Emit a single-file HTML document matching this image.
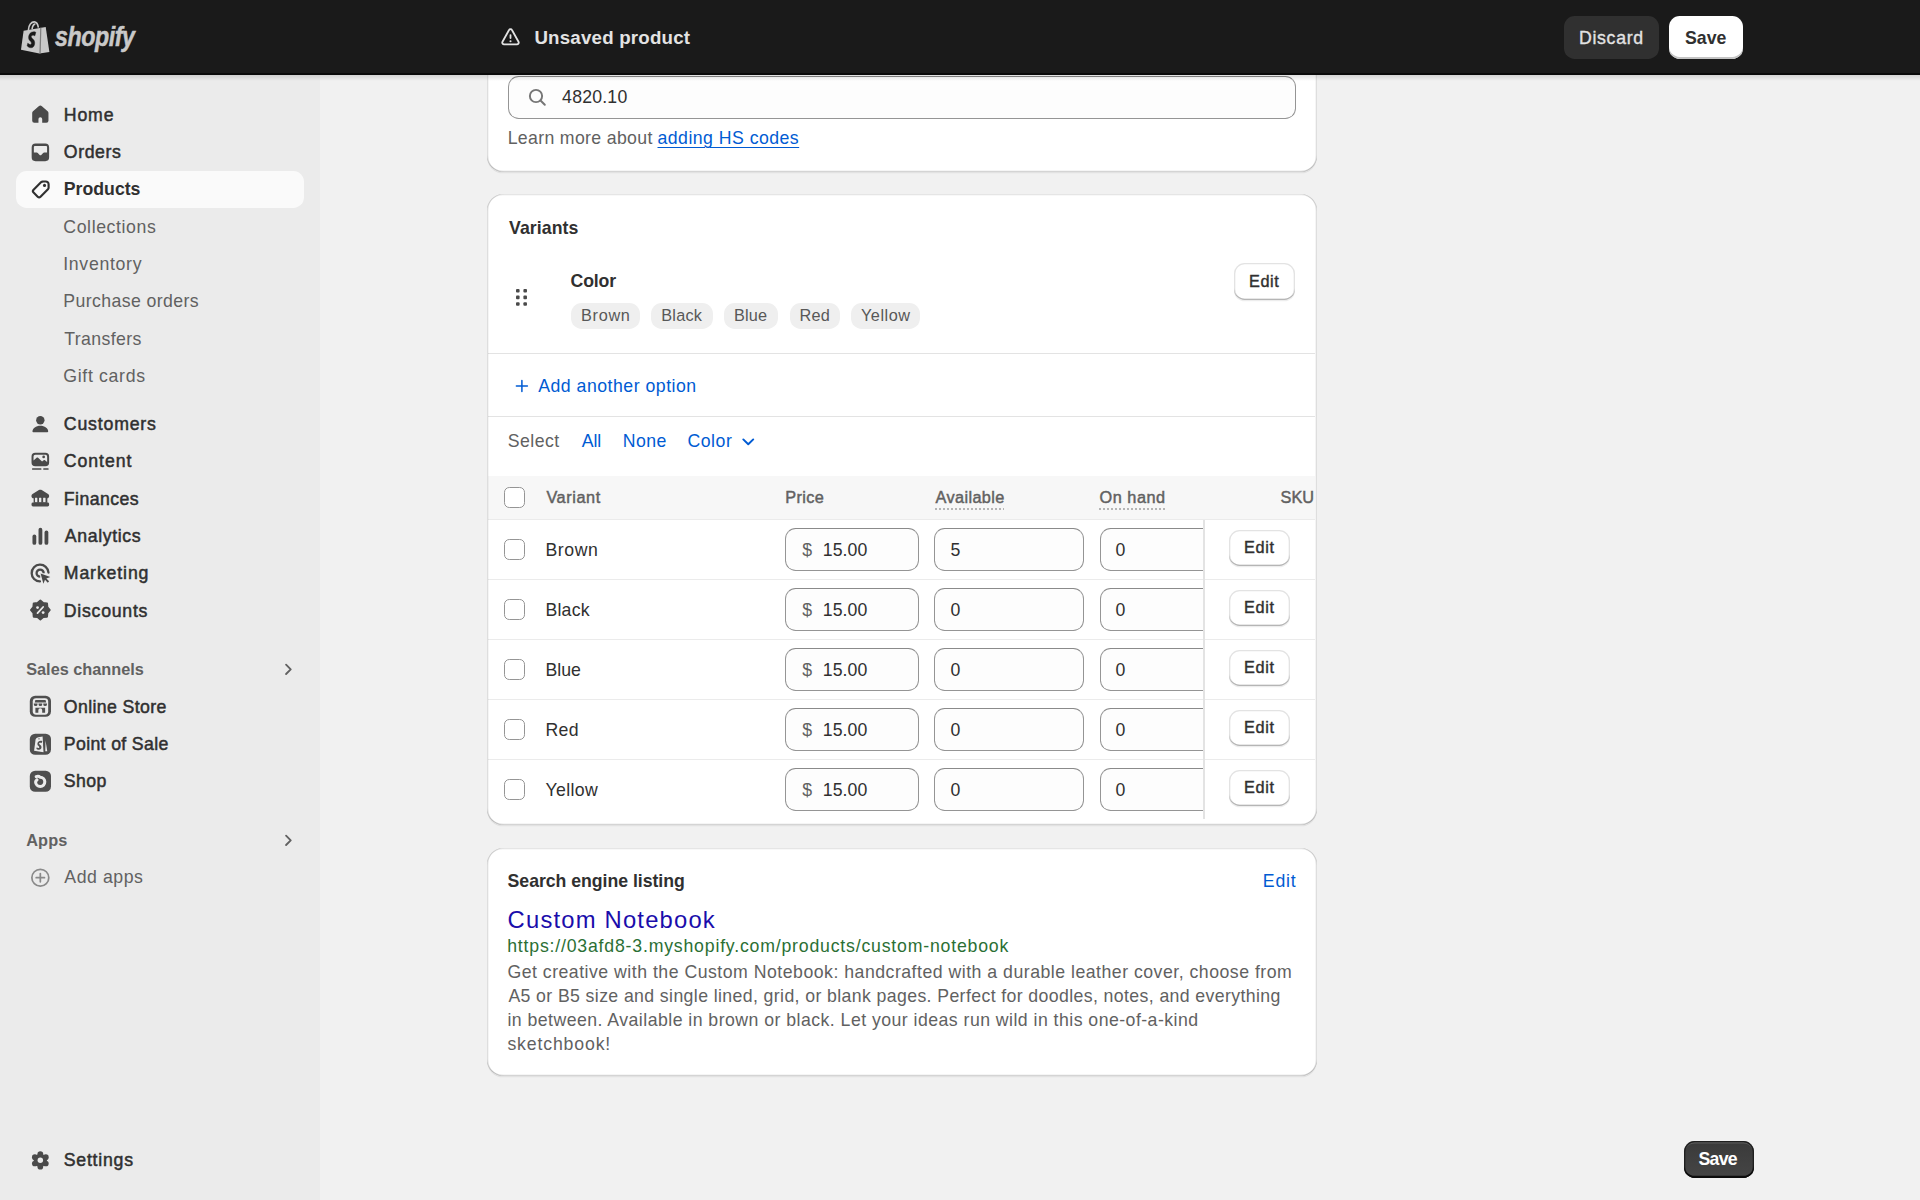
<!DOCTYPE html>
<html><head><meta charset="utf-8"><style>
*{box-sizing:border-box;margin:0;padding:0}
html,body{width:1920px;height:1200px;overflow:hidden;background:#f1f1f1;font-family:"Liberation Sans",sans-serif;color:#303030}
.a{position:absolute}
.t{position:absolute;line-height:1;white-space:nowrap}
#top{position:absolute;left:0;top:0;width:1920px;height:75px;background:#1a1a1a;z-index:5}
#topline{position:absolute;left:0;top:73px;width:1920px;height:2px;background:#0a0a0a;z-index:6}
#topshadow{position:absolute;left:0;top:75px;width:1920px;height:6px;background:linear-gradient(rgba(0,0,0,.12),rgba(0,0,0,0));z-index:4}
#nav{position:absolute;left:0;top:0;width:320px;height:1200px;background:#ebebeb}
.ic{position:absolute}
.card{position:absolute;left:487px;width:829.5px;background:#fff;border-radius:16px;box-shadow:0 1.33px 0 0 rgba(26,26,26,.07)}
.cardb{position:absolute;left:487px;width:829.5px;border-radius:16px;z-index:3;box-shadow:inset 1.33px 0 0 0 rgba(0,0,0,.13), inset -1.33px 0 0 0 rgba(0,0,0,.13), inset 0 -1.33px 0 0 rgba(0,0,0,.17), inset 0 1.33px 0 0 rgba(204,204,204,.5)}
.inp{position:absolute;background:#fdfdfd;border:1.33px solid #959595;border-top-color:#8a8a8a;border-radius:10.7px}
.btn{position:absolute;background:#fff;border-radius:10.7px;box-shadow:0 1.33px 0 0 rgba(0,0,0,.07), inset 0 -1.33px 0 0 #b5b5b5, inset 0 0 0 1.33px #e3e3e3}
.pill{position:absolute;height:26.3px;background:#efefef;border-radius:10.7px}
.hl{position:absolute;height:1.33px;background:#ebebeb}
.cb{position:absolute;width:21px;height:21px;border:1.4px solid #959595;border-radius:5.3px;background:#fff}
</style></head><body>
<div id="nav"></div>
<div class="a" style="left:16px;top:171.2px;width:288px;height:37.3px;background:#fafafa;border-radius:10.7px"></div>
<svg class="ic" style="left:26.66px;top:100.87px" width="26.67" height="26.67" viewBox="0 0 20 20"><path fill="#4a4a4a" d="M8.8 4a1.8 1.8 0 0 1 2.4 0l4.3 3.7c.4.35.6.85.6 1.35v5.75a1.6 1.6 0 0 1-1.6 1.6H11.4v-2.9a1.4 1.4 0 0 0-2.8 0v2.9H5.5a1.6 1.6 0 0 1-1.6-1.6V9.05c0-.5.2-1 .6-1.35z"/></svg>
<svg class="ic" style="left:26.66px;top:138.56px" width="26.67" height="26.67" viewBox="0 0 20 20"><path fill="#4a4a4a" fill-rule="evenodd" d="M6.4 3.47h7.3a2.9 2.9 0 0 1 2.9 2.9v7.35a2.9 2.9 0 0 1-2.9 2.9H6.4a2.9 2.9 0 0 1-2.9-2.9V6.37a2.9 2.9 0 0 1 2.9-2.9zM5.9 5.2H14.3Q15.05 5.2 15.05 5.95V10.05H12.9Q12.4 10.05 12.1 10.45L10.9 11.8Q10.1 12.55 9.3 11.8L8.1 10.45Q7.8 10.05 7.3 10.05H5.15V5.95Q5.15 5.2 5.9 5.2z"/></svg>
<svg class="ic" style="left:26.66px;top:175.97px" width="26.67" height="26.67" viewBox="0 0 20 20"><path fill="none" stroke="#303030" stroke-width="1.6" stroke-linejoin="round" d="M11.6 4.15h2.5a2.1 2.1 0 0 1 2.1 2.1v2.5c0 .45-.18.88-.5 1.2l-5.55 5.55a1.5 1.5 0 0 1-2.12 0l-3.1-3.1a1.5 1.5 0 0 1 0-2.12l5.55-5.55c.32-.32.75-.5 1.2-.5z"/><circle cx="13.15" cy="7.05" r="1.15" fill="#303030"/></svg>
<svg class="ic" style="left:26.66px;top:410.67px" width="26.67" height="26.67" viewBox="0 0 20 20"><circle cx="10" cy="6.9" r="3.15" fill="#4a4a4a"/><path fill="#4a4a4a" d="M4.1 15.4c0-2.4 2.65-4.3 5.9-4.3s5.9 1.9 5.9 4.3c0 .35-.25.6-.6.6H4.7c-.35 0-.6-.25-.6-.6z"/></svg>
<svg class="ic" style="left:26.66px;top:447.67px" width="26.67" height="26.67" viewBox="0 0 20 20"><path fill="#4a4a4a" fill-rule="evenodd" d="M6.2 3.6h7.6a2.8 2.8 0 0 1 2.8 2.8v4.4a2.8 2.8 0 0 1-2.8 2.8H6.2a2.8 2.8 0 0 1-2.8-2.8V6.4a2.8 2.8 0 0 1 2.8-2.8zm0 1.5a1.3 1.3 0 0 0-1.3 1.3v2.9l2.3-2c.3-.3.8-.3 1.1 0l3 2.8 1.2-1c.3-.2.7-.2 1 0l1.6 1.4V6.4a1.3 1.3 0 0 0-1.3-1.3z"/><circle cx="12.5" cy="6.7" r="1" fill="#4a4a4a"/><rect x="3.8" y="15.1" width="7" height="1.3" rx=".3" fill="#4a4a4a"/><rect x="12.2" y="15.1" width="4" height="1.3" rx=".3" fill="#4a4a4a"/></svg>
<svg class="ic" style="left:26.66px;top:484.67px" width="26.67" height="26.67" viewBox="0 0 20 20"><path fill="#4a4a4a" d="M8.95 3.8c.65-.4 1.45-.4 2.1 0l4.75 2.9c.5.3.8.85.8 1.45v.2c0 .85-.7 1.6-1.6 1.6H4.95c-.9 0-1.6-.75-1.6-1.6v-.2c0-.6.3-1.15.8-1.45z"/><rect x="4.97" y="8.8" width="10.28" height="4.6" fill="#4a4a4a"/><rect x="6.02" y="9.5" width="1.73" height="3.45" rx=".3" fill="#ebebeb"/><rect x="9.02" y="9.5" width="1.73" height="3.45" rx=".3" fill="#ebebeb"/><rect x="12.1" y="9.5" width="1.8" height="3.45" rx=".3" fill="#ebebeb"/><rect x="3.4" y="13.1" width="13.2" height="3.05" rx="1.1" fill="#4a4a4a"/></svg>
<svg class="ic" style="left:26.66px;top:523.16px" width="26.67" height="26.67" viewBox="0 0 20 20"><rect x="4.1" y="8.65" width="2.85" height="7.7" rx="1.42" fill="#4a4a4a"/><rect x="8.65" y="3.6" width="2.85" height="12.75" rx="1.42" fill="#4a4a4a"/><rect x="13.15" y="5.7" width="2.85" height="10.65" rx="1.42" fill="#4a4a4a"/></svg>
<svg class="ic" style="left:26.66px;top:560.16px" width="26.67" height="26.67" viewBox="0 0 20 20"><path fill="none" stroke="#4a4a4a" stroke-width="1.75" stroke-linecap="round" d="M16.1 9.4A6.3 6.3 0 1 0 9.7 16.1"/><path fill="none" stroke="#4a4a4a" stroke-width="1.75" d="M12.5 9.9A2.65 2.65 0 1 0 9.9 12.5"/><path fill="#4a4a4a" d="M10.2 10.1l7.3 2.6-3 1.2 2.1 2.1-1 1-2.1-2.1-1.2 3z"/></svg>
<svg class="ic" style="left:26.66px;top:597.46px" width="26.67" height="26.67" viewBox="0 0 20 20"><polygon points="10.03,2.67 12.21,4.50 15.05,4.75 15.30,7.59 17.13,9.77 15.30,11.95 15.05,14.79 12.21,15.04 10.03,16.87 7.85,15.04 5.01,14.79 4.76,11.95 2.93,9.77 4.76,7.59 5.01,4.75 7.85,4.50" fill="#4a4a4a" stroke="#4a4a4a" stroke-width="1.4" stroke-linejoin="round"/><path stroke="#ebebeb" stroke-width="1.35" stroke-linecap="round" d="M7.9 12.1l4.2-4.6"/><circle cx="7.9" cy="7.9" r="1.05" fill="#ebebeb"/><circle cx="12.1" cy="11.7" r="1.05" fill="#ebebeb"/></svg>
<svg class="ic" style="left:26.66px;top:693.26px" width="26.67" height="26.67" viewBox="0 0 20 20"><rect x="2.1" y="2.0" width="15.9" height="15.9" rx="4" fill="#4f4f4f"/><rect x="4.3" y="3.85" width="11.6" height="12.45" rx="2.6" fill="#ebebeb"/><path fill="#4f4f4f" d="M6.3 5.2h7.6l.5 1.9H5.8z"/><path fill="#4f4f4f" d="M5.1 7.9h2.8v.5a1.4 1.4 0 0 1-2.8 0zM8.65 7.9h2.8v.5a1.4 1.4 0 0 1-2.8 0zM12.2 7.9h2.8v.5a1.4 1.4 0 0 1-2.8 0z"/><path fill="#4f4f4f" d="M6.3 11.05h7.3v3.75h-2.2v-1.9a1.45 1.45 0 0 0-2.9 0v1.9H6.3z"/></svg>
<svg class="ic" style="left:26.66px;top:730.56px" width="26.67" height="26.67" viewBox="0 0 20 20"><rect x="2.1" y="2.0" width="15.9" height="15.9" rx="4" fill="#4f4f4f"/><path fill="#ebebeb" d="M5.31 14.75 L6.45 6.4 Q6.8 4.95 8.5 4.6 L11.7 4.13 L12.4 15.92 Z"/><path fill="#ebebeb" d="M13.9 7.1 L15.2 15.2 L13.7 15.2 z"/><circle cx="9.0" cy="5.9" r=".55" fill="#4f4f4f"/><path fill="#4f4f4f" transform="matrix(0.9 0 0 0.9 1.4 0.3)" d="M11.1 8.35l-.5 1.5s-.5-.3-1.1-.3c-.9 0-.95.55-.95.7 0 .75 2 1.05 2 2.85 0 1.4-.9 2.3-2.1 2.3-1.5 0-2.2-.95-2.2-.95l.4-1.3s.8.65 1.45.65c.45 0 .6-.35.6-.6 0-1-1.6-1.05-1.6-2.65 0-1.4 1-2.75 3-2.75.75 0 1.1.3 1.1.3z"/></svg>
<svg class="ic" style="left:26.66px;top:767.87px" width="26.67" height="26.67" viewBox="0 0 20 20"><rect x="2.1" y="2.0" width="15.9" height="15.9" rx="4" fill="#4f4f4f"/><path fill="none" stroke="#ebebeb" stroke-width="2.3" stroke-linecap="round" d="M6.9 6.5 C7.8 6.1 8.9 6.0 9.9 6.95 A3.45 3.45 0 1 1 6.45 10.5 Q6.5 9.5 7.5 8.9"/></svg>
<svg class="ic" style="left:26.66px;top:864.37px" width="26.67" height="26.67" viewBox="0 0 20 20"><circle cx="10" cy="10.3" r="6.35" fill="none" stroke="#8a8a8a" stroke-width="1.3"/><path stroke="#8a8a8a" stroke-width="1.3" stroke-linecap="round" d="M10 7.2v6.2M6.9 10.3h6.2"/></svg>
<svg class="ic" style="left:26.66px;top:1146.66px" width="26.67" height="26.67" viewBox="0 0 20 20"><circle cx="10" cy="10" r="4.9" fill="#4a4a4a"/><circle cx="10.00" cy="5.25" r="2.15" fill="#4a4a4a"/><circle cx="5.89" cy="7.62" r="2.15" fill="#4a4a4a"/><circle cx="5.89" cy="12.38" r="2.15" fill="#4a4a4a"/><circle cx="10.00" cy="14.75" r="2.15" fill="#4a4a4a"/><circle cx="14.11" cy="12.38" r="2.15" fill="#4a4a4a"/><circle cx="14.11" cy="7.62" r="2.15" fill="#4a4a4a"/><circle cx="10" cy="10" r="2.05" fill="#ebebeb"/></svg>
<div class="t" style="left:63.80px;top:107px;font-size:17.7px;color:#303030;font-weight:400;letter-spacing:0.833px;-webkit-text-stroke:0.5px #303030;">Home</div>
<div class="t" style="left:63.80px;top:144px;font-size:17.7px;color:#303030;font-weight:400;letter-spacing:0.600px;-webkit-text-stroke:0.5px #303030;">Orders</div>
<div class="t" style="left:63.80px;top:416px;font-size:17.7px;color:#303030;font-weight:400;letter-spacing:0.825px;-webkit-text-stroke:0.5px #303030;">Customers</div>
<div class="t" style="left:63.80px;top:453px;font-size:17.7px;color:#303030;font-weight:400;letter-spacing:0.933px;-webkit-text-stroke:0.5px #303030;">Content</div>
<div class="t" style="left:63.80px;top:491px;font-size:17.7px;color:#303030;font-weight:400;letter-spacing:0.429px;-webkit-text-stroke:0.5px #303030;">Finances</div>
<div class="t" style="left:64.80px;top:528px;font-size:17.7px;color:#303030;font-weight:400;letter-spacing:0.625px;-webkit-text-stroke:0.5px #303030;">Analytics</div>
<div class="t" style="left:63.80px;top:565px;font-size:17.7px;color:#303030;font-weight:400;letter-spacing:0.875px;-webkit-text-stroke:0.5px #303030;">Marketing</div>
<div class="t" style="left:63.80px;top:603px;font-size:17.7px;color:#303030;font-weight:400;letter-spacing:0.750px;-webkit-text-stroke:0.5px #303030;">Discounts</div>
<div class="t" style="left:63.80px;top:699px;font-size:17.7px;color:#303030;font-weight:400;letter-spacing:0.391px;-webkit-text-stroke:0.5px #303030;">Online Store</div>
<div class="t" style="left:63.80px;top:736px;font-size:17.7px;color:#303030;font-weight:400;letter-spacing:0.350px;-webkit-text-stroke:0.5px #303030;">Point of Sale</div>
<div class="t" style="left:63.80px;top:773px;font-size:17.7px;color:#303030;font-weight:400;letter-spacing:0.433px;-webkit-text-stroke:0.5px #303030;">Shop</div>
<div class="t" style="left:63.80px;top:1152px;font-size:17.7px;color:#303030;font-weight:400;letter-spacing:0.757px;-webkit-text-stroke:0.5px #303030;">Settings</div>
<div class="t" style="left:63.80px;top:181px;font-size:17.7px;color:#303030;font-weight:700;letter-spacing:0.000px;">Products</div>
<div class="t" style="left:63.30px;top:219px;font-size:17.7px;color:#616161;font-weight:400;letter-spacing:0.600px;">Collections</div>
<div class="t" style="left:63.20px;top:256px;font-size:17.7px;color:#616161;font-weight:400;letter-spacing:0.700px;">Inventory</div>
<div class="t" style="left:63.30px;top:293px;font-size:17.7px;color:#616161;font-weight:400;letter-spacing:0.400px;">Purchase orders</div>
<div class="t" style="left:64.30px;top:331px;font-size:17.7px;color:#616161;font-weight:400;letter-spacing:0.375px;">Transfers</div>
<div class="t" style="left:63.30px;top:368px;font-size:17.7px;color:#616161;font-weight:400;letter-spacing:0.667px;">Gift cards</div>
<div class="t" style="left:64.30px;top:869px;font-size:17.7px;color:#616161;font-weight:400;letter-spacing:0.557px;">Add apps</div>
<div class="t" style="left:26.20px;top:661px;font-size:16.3px;color:#616161;font-weight:700;letter-spacing:0.000px;">Sales channels</div>
<div class="t" style="left:26.20px;top:832px;font-size:16.3px;color:#616161;font-weight:700;letter-spacing:0.167px;">Apps</div>
<svg class="ic" style="left:274.67px;top:656.16px" width="26.67" height="26.67" viewBox="0 0 20 20"><path fill="none" stroke="#616161" stroke-width="1.4" stroke-linecap="round" stroke-linejoin="round" d="M8.3 6.5l3.5 3.5-3.5 3.5"/></svg>
<svg class="ic" style="left:274.67px;top:826.87px" width="26.67" height="26.67" viewBox="0 0 20 20"><path fill="none" stroke="#616161" stroke-width="1.4" stroke-linecap="round" stroke-linejoin="round" d="M8.3 6.5l3.5 3.5-3.5 3.5"/></svg>
<div id="top"></div><div id="topline"></div><div id="topshadow"></div>
<svg class="a" style="left:21px;top:21px;z-index:7" width="29" height="33" viewBox="0 0 29 33">
<path fill="#c9c9c9" d="M2.6 9.8 L24.7 6.1 L28.4 31 L18.4 32.6 L0 28.8 Z"/>
<path fill="none" stroke="#c9c9c9" stroke-width="1.6" d="M7.4 9 C7.6 4 10.5 .9 13.2 .9 C15.6 .9 16.8 3.2 17.4 6.6 M11 8.4 C11.5 5 12.8 3 14.4 3.1"/>
<path fill="#7d7d7d" d="M19.2 6.8 L20.4 6.6 L19.7 32.4 L18.4 32.6 Z"/>
<path fill="#1a1a1a" stroke="#1a1a1a" stroke-width=".35" transform="matrix(0.98 0 0 1.18 1.2 -2.9)" d="M13.9 12.1l-1 3s-.9-.5-2-.5c-1.6 0-1.7 1-1.7 1.3 0 1.4 3.6 1.9 3.6 5.1 0 2.5-1.6 4.2-3.8 4.2-2.7 0-4-1.7-4-1.7l.7-2.3s1.4 1.2 2.6 1.2c.8 0 1.1-.6 1.1-1.1 0-1.8-2.9-1.9-2.9-4.8 0-2.5 1.8-5 5.4-5 1.4 0 2 .6 2 .6z"/>
</svg>
<div class="t" style="left:54.50px;top:24px;font-size:27px;color:#c9c9c9;font-weight:700;letter-spacing:-0.500px;-webkit-text-stroke:0.5px #c9c9c9;font-style:italic;z-index:7;transform:scaleX(0.86);transform-origin:0 0">shopify</div>
<svg class="a" style="left:500px;top:27px;z-index:7" width="21" height="20" viewBox="0 0 21 20"><path d="M8.9 3.2a1.8 1.8 0 0 1 3.2 0l6.4 11.5a1.8 1.8 0 0 1-1.6 2.7H4.1a1.8 1.8 0 0 1-1.6-2.7z" fill="none" stroke="#e3e3e3" stroke-width="1.8" stroke-linejoin="round"/><rect x="9.6" y="7.2" width="1.8" height="4.8" rx=".9" fill="#e3e3e3"/><circle cx="10.5" cy="14.2" r="1.05" fill="#e3e3e3"/></svg>
<div class="t" style="left:534.40px;top:29px;font-size:18.7px;color:#e3e3e3;font-weight:700;letter-spacing:0.214px;z-index:7">Unsaved product</div>
<div class="a" style="left:1563.5px;top:16px;width:95px;height:42.7px;background:#303030;border-radius:10.7px;z-index:7"></div>
<div class="t" style="left:1578.90px;top:30px;font-size:17.7px;color:#e3e3e3;font-weight:400;letter-spacing:0.717px;-webkit-text-stroke:0.35px #e3e3e3;z-index:7">Discard</div>
<div class="a" style="left:1669px;top:16px;width:74px;height:42.7px;background:#fff;border-radius:10.7px;box-shadow:inset 0 -2px 0 0 #c4c4c4;z-index:7"></div>
<div class="t" style="left:1685.00px;top:30px;font-size:17.7px;color:#303030;font-weight:700;letter-spacing:0.000px;z-index:7">Save</div>
<div class="card" style="top:20px;height:151.5px"></div>
<div class="inp" style="left:508px;top:76.3px;width:787.5px;height:42.3px"></div>
<svg class="ic" style="left:524.00px;top:84.00px" width="26.67" height="26.67" viewBox="0 0 20 20"><circle cx="9" cy="9" r="4.6" fill="none" stroke="#767676" stroke-width="1.45"/><path stroke="#767676" stroke-width="1.5" stroke-linecap="round" d="M12.4 12.4l3.2 3.2"/></svg>
<div class="t" style="left:562.10px;top:89px;font-size:17.7px;color:#303030;font-weight:400;letter-spacing:0.200px;">4820.10</div>
<div class="t" style="left:507.70px;top:130px;font-size:17.7px;color:#616161;font-weight:400;letter-spacing:0.333px;">Learn more about</div>
<div class="t" style="left:657.50px;top:130px;font-size:17.7px;color:#005bd3;font-weight:400;letter-spacing:0.464px;text-decoration:underline;text-underline-offset:3px;text-decoration-thickness:1.33px">adding HS codes</div>
<div class="card" style="top:194.3px;height:631px"></div>
<div class="t" style="left:509.00px;top:220px;font-size:17.7px;color:#303030;font-weight:700;letter-spacing:0.071px;">Variants</div>
<svg class="ic" style="left:515.60px;top:288.80px" width="11.2" height="17" viewBox="0 0 11.2 17"><rect x="0" y="0" width="3.6" height="3.6" rx="1" fill="#4a4a4a"/><rect x="0" y="6.6" width="3.6" height="3.6" rx="1" fill="#4a4a4a"/><rect x="0" y="13.2" width="3.6" height="3.6" rx="1" fill="#4a4a4a"/><rect x="7.4" y="0" width="3.6" height="3.6" rx="1" fill="#4a4a4a"/><rect x="7.4" y="6.6" width="3.6" height="3.6" rx="1" fill="#4a4a4a"/><rect x="7.4" y="13.2" width="3.6" height="3.6" rx="1" fill="#4a4a4a"/></svg>
<div class="t" style="left:570.50px;top:273px;font-size:17.7px;color:#303030;font-weight:700;letter-spacing:-0.125px;">Color</div>
<div class="pill" style="left:570.8px;top:302.9px;width:68.8px"></div>
<div class="t" style="left:581.10px;top:307px;font-size:16.3px;color:#585858;font-weight:400;letter-spacing:0.650px;">Brown</div>
<div class="pill" style="left:650.8px;top:302.9px;width:62.1px"></div>
<div class="t" style="left:661.30px;top:307px;font-size:16.3px;color:#585858;font-weight:400;letter-spacing:0.200px;">Black</div>
<div class="pill" style="left:724px;top:302.9px;width:54.0px"></div>
<div class="t" style="left:734.00px;top:307px;font-size:16.3px;color:#585858;font-weight:400;letter-spacing:0.167px;">Blue</div>
<div class="pill" style="left:789.5px;top:302.9px;width:50.1px"></div>
<div class="t" style="left:799.50px;top:307px;font-size:16.3px;color:#585858;font-weight:400;letter-spacing:0.250px;">Red</div>
<div class="pill" style="left:850.8px;top:302.9px;width:69.7px"></div>
<div class="t" style="left:861.00px;top:307px;font-size:16.3px;color:#585858;font-weight:400;letter-spacing:0.500px;">Yellow</div>
<div class="btn" style="left:1234.3px;top:263px;width:60.7px;height:36.5px"></div>
<div class="t" style="left:1249.00px;top:273px;font-size:16.3px;color:#303030;font-weight:400;letter-spacing:0.600px;-webkit-text-stroke:0.4px #303030;">Edit</div>
<div class="hl" style="left:488.3px;top:353px;width:827px;background:#e3e3e3"></div>
<svg class="ic" style="left:512.50px;top:376.80px" width="17.8" height="17.8" viewBox="0 0 20 20"><path stroke="#005bd3" stroke-width="1.7" stroke-linecap="round" d="M10 3.8v12.4M3.8 10h12.4"/></svg>
<div class="t" style="left:538.20px;top:378px;font-size:17.7px;color:#005bd3;font-weight:400;letter-spacing:0.500px;">Add another option</div>
<div class="hl" style="left:488.3px;top:416px;width:827px;background:#e3e3e3"></div>
<div class="t" style="left:507.70px;top:433px;font-size:17.7px;color:#616161;font-weight:400;letter-spacing:0.480px;">Select</div>
<div class="t" style="left:581.70px;top:433px;font-size:17.7px;color:#005bd3;font-weight:400;letter-spacing:-0.050px;">All</div>
<div class="t" style="left:622.70px;top:433px;font-size:17.7px;color:#005bd3;font-weight:400;letter-spacing:0.433px;">None</div>
<div class="t" style="left:687.40px;top:433px;font-size:17.7px;color:#005bd3;font-weight:400;letter-spacing:0.550px;">Color</div>
<svg class="ic" style="left:738.60px;top:432.00px" width="19.5" height="19.5" viewBox="0 0 20 20"><path fill="none" stroke="#005bd3" stroke-width="2" stroke-linecap="round" stroke-linejoin="round" d="M4.4 7.6l5.1 5 5.1-5"/></svg>
<div class="a" style="left:488.3px;top:476.3px;width:827px;height:43px;background:#f7f7f7"></div>
<div class="cb" style="left:504.2px;top:486.7px"></div>
<div class="t" style="left:546.40px;top:489px;font-size:16.3px;color:#616161;font-weight:400;letter-spacing:0.567px;-webkit-text-stroke:0.45px #616161;">Variant</div>
<div class="t" style="left:785.30px;top:489px;font-size:16.3px;color:#616161;font-weight:400;letter-spacing:0.375px;-webkit-text-stroke:0.45px #616161;">Price</div>
<div class="t" style="left:935.50px;top:489px;font-size:16.3px;color:#616161;font-weight:400;letter-spacing:0.387px;-webkit-text-stroke:0.45px #616161;text-decoration:underline dotted #b5b5b5;text-decoration-thickness:2px;text-underline-offset:4.5px;">Available</div>
<div class="t" style="left:1099.50px;top:489px;font-size:16.3px;color:#616161;font-weight:400;letter-spacing:0.533px;-webkit-text-stroke:0.45px #616161;text-decoration:underline dotted #b5b5b5;text-decoration-thickness:2px;text-underline-offset:4.5px;">On hand</div>
<div class="t" style="left:1280.60px;top:489px;font-size:16.3px;color:#616161;font-weight:400;letter-spacing:0.000px;-webkit-text-stroke:0.45px #616161;">SKU</div>
<div class="hl" style="left:488.3px;top:519.0px;width:827px;background:#ebebeb"></div>
<div class="cb" style="left:504.2px;top:538.6px"></div>
<div class="t" style="left:545.40px;top:542px;font-size:17.7px;color:#303030;font-weight:400;letter-spacing:0.600px;">Brown</div>
<div class="inp" style="left:785.4px;top:528.1px;width:133.6px;height:42.5px"></div>
<div class="t" style="left:802.20px;top:542px;font-size:17.7px;color:#616161;font-weight:400;letter-spacing:0.000px;">$</div>
<div class="t" style="left:822.80px;top:542px;font-size:17.7px;color:#303030;font-weight:400;letter-spacing:0.050px;">15.00</div>
<div class="inp" style="left:934.4px;top:528.1px;width:149.5px;height:42.5px"></div>
<div class="t" style="left:950.60px;top:542px;font-size:17.7px;color:#303030;font-weight:400;letter-spacing:0.000px;">5</div>
<div class="inp" style="left:1100px;top:528.1px;width:104px;height:42.5px;border-right:none;border-radius:10.7px 0 0 10.7px"></div>
<div class="t" style="left:1115.50px;top:542px;font-size:17.7px;color:#303030;font-weight:400;letter-spacing:0.000px;">0</div>
<div class="btn" style="left:1229.3px;top:530.0px;width:60.7px;height:36px"></div>
<div class="t" style="left:1243.90px;top:539px;font-size:16.3px;color:#303030;font-weight:400;letter-spacing:0.700px;-webkit-text-stroke:0.4px #303030;">Edit</div>
<div class="hl" style="left:488.3px;top:579.0px;width:827px;background:#ebebeb"></div>
<div class="cb" style="left:504.2px;top:598.6px"></div>
<div class="t" style="left:545.40px;top:602px;font-size:17.7px;color:#303030;font-weight:400;letter-spacing:0.225px;">Black</div>
<div class="inp" style="left:785.4px;top:588.1px;width:133.6px;height:42.5px"></div>
<div class="t" style="left:802.20px;top:602px;font-size:17.7px;color:#616161;font-weight:400;letter-spacing:0.000px;">$</div>
<div class="t" style="left:822.80px;top:602px;font-size:17.7px;color:#303030;font-weight:400;letter-spacing:0.050px;">15.00</div>
<div class="inp" style="left:934.4px;top:588.1px;width:149.5px;height:42.5px"></div>
<div class="t" style="left:950.60px;top:602px;font-size:17.7px;color:#303030;font-weight:400;letter-spacing:0.000px;">0</div>
<div class="inp" style="left:1100px;top:588.1px;width:104px;height:42.5px;border-right:none;border-radius:10.7px 0 0 10.7px"></div>
<div class="t" style="left:1115.50px;top:602px;font-size:17.7px;color:#303030;font-weight:400;letter-spacing:0.000px;">0</div>
<div class="btn" style="left:1229.3px;top:590.0px;width:60.7px;height:36px"></div>
<div class="t" style="left:1243.90px;top:599px;font-size:16.3px;color:#303030;font-weight:400;letter-spacing:0.700px;-webkit-text-stroke:0.4px #303030;">Edit</div>
<div class="hl" style="left:488.3px;top:639.0px;width:827px;background:#ebebeb"></div>
<div class="cb" style="left:504.2px;top:658.6px"></div>
<div class="t" style="left:545.40px;top:662px;font-size:17.7px;color:#303030;font-weight:400;letter-spacing:0.033px;">Blue</div>
<div class="inp" style="left:785.4px;top:648.1px;width:133.6px;height:42.5px"></div>
<div class="t" style="left:802.20px;top:662px;font-size:17.7px;color:#616161;font-weight:400;letter-spacing:0.000px;">$</div>
<div class="t" style="left:822.80px;top:662px;font-size:17.7px;color:#303030;font-weight:400;letter-spacing:0.050px;">15.00</div>
<div class="inp" style="left:934.4px;top:648.1px;width:149.5px;height:42.5px"></div>
<div class="t" style="left:950.60px;top:662px;font-size:17.7px;color:#303030;font-weight:400;letter-spacing:0.000px;">0</div>
<div class="inp" style="left:1100px;top:648.1px;width:104px;height:42.5px;border-right:none;border-radius:10.7px 0 0 10.7px"></div>
<div class="t" style="left:1115.50px;top:662px;font-size:17.7px;color:#303030;font-weight:400;letter-spacing:0.000px;">0</div>
<div class="btn" style="left:1229.3px;top:650.0px;width:60.7px;height:36px"></div>
<div class="t" style="left:1243.90px;top:659px;font-size:16.3px;color:#303030;font-weight:400;letter-spacing:0.700px;-webkit-text-stroke:0.4px #303030;">Edit</div>
<div class="hl" style="left:488.3px;top:699.0px;width:827px;background:#ebebeb"></div>
<div class="cb" style="left:504.2px;top:718.6px"></div>
<div class="t" style="left:545.40px;top:722px;font-size:17.7px;color:#303030;font-weight:400;letter-spacing:0.400px;">Red</div>
<div class="inp" style="left:785.4px;top:708.1px;width:133.6px;height:42.5px"></div>
<div class="t" style="left:802.20px;top:722px;font-size:17.7px;color:#616161;font-weight:400;letter-spacing:0.000px;">$</div>
<div class="t" style="left:822.80px;top:722px;font-size:17.7px;color:#303030;font-weight:400;letter-spacing:0.050px;">15.00</div>
<div class="inp" style="left:934.4px;top:708.1px;width:149.5px;height:42.5px"></div>
<div class="t" style="left:950.60px;top:722px;font-size:17.7px;color:#303030;font-weight:400;letter-spacing:0.000px;">0</div>
<div class="inp" style="left:1100px;top:708.1px;width:104px;height:42.5px;border-right:none;border-radius:10.7px 0 0 10.7px"></div>
<div class="t" style="left:1115.50px;top:722px;font-size:17.7px;color:#303030;font-weight:400;letter-spacing:0.000px;">0</div>
<div class="btn" style="left:1229.3px;top:710.0px;width:60.7px;height:36px"></div>
<div class="t" style="left:1243.90px;top:719px;font-size:16.3px;color:#303030;font-weight:400;letter-spacing:0.700px;-webkit-text-stroke:0.4px #303030;">Edit</div>
<div class="hl" style="left:488.3px;top:759.0px;width:827px;background:#ebebeb"></div>
<div class="cb" style="left:504.2px;top:778.6px"></div>
<div class="t" style="left:545.40px;top:782px;font-size:17.7px;color:#303030;font-weight:400;letter-spacing:0.400px;">Yellow</div>
<div class="inp" style="left:785.4px;top:768.1px;width:133.6px;height:42.5px"></div>
<div class="t" style="left:802.20px;top:782px;font-size:17.7px;color:#616161;font-weight:400;letter-spacing:0.000px;">$</div>
<div class="t" style="left:822.80px;top:782px;font-size:17.7px;color:#303030;font-weight:400;letter-spacing:0.050px;">15.00</div>
<div class="inp" style="left:934.4px;top:768.1px;width:149.5px;height:42.5px"></div>
<div class="t" style="left:950.60px;top:782px;font-size:17.7px;color:#303030;font-weight:400;letter-spacing:0.000px;">0</div>
<div class="inp" style="left:1100px;top:768.1px;width:104px;height:42.5px;border-right:none;border-radius:10.7px 0 0 10.7px"></div>
<div class="t" style="left:1115.50px;top:782px;font-size:17.7px;color:#303030;font-weight:400;letter-spacing:0.000px;">0</div>
<div class="btn" style="left:1229.3px;top:770.0px;width:60.7px;height:36px"></div>
<div class="t" style="left:1243.90px;top:779px;font-size:16.3px;color:#303030;font-weight:400;letter-spacing:0.700px;-webkit-text-stroke:0.4px #303030;">Edit</div>
<div class="a" style="left:1203.3px;top:520px;width:1.33px;height:299px;background:#e3e3e3"></div>
<div class="card" style="top:847.6px;height:228.6px"></div>
<div class="t" style="left:507.60px;top:873px;font-size:17.7px;color:#303030;font-weight:700;letter-spacing:-0.035px;">Search engine listing</div>
<div class="t" style="left:1262.80px;top:873px;font-size:17.7px;color:#005bd3;font-weight:400;letter-spacing:0.800px;">Edit</div>
<div class="t" style="left:507.60px;top:908px;font-size:23.8px;color:#1a0dab;font-weight:400;letter-spacing:1.193px;">Custom Notebook</div>
<div class="t" style="left:507.20px;top:938px;font-size:17.7px;color:#2b6f34;font-weight:400;letter-spacing:0.802px;">https://03afd8-3.myshopify.com/products/custom-notebook</div>
<div class="t" style="left:507.40px;top:964px;font-size:17.7px;color:#616161;font-weight:400;letter-spacing:0.495px;">Get creative with the Custom Notebook: handcrafted with a durable leather cover, choose from</div>
<div class="t" style="left:508.40px;top:988px;font-size:17.7px;color:#616161;font-weight:400;letter-spacing:0.385px;">A5 or B5 size and single lined, grid, or blank pages. Perfect for doodles, notes, and everything</div>
<div class="t" style="left:507.40px;top:1012px;font-size:17.7px;color:#616161;font-weight:400;letter-spacing:0.461px;">in between. Available in brown or black. Let your ideas run wild in this one-of-a-kind</div>
<div class="t" style="left:507.40px;top:1036px;font-size:17.7px;color:#616161;font-weight:400;letter-spacing:0.850px;">sketchbook!</div>
<div class="a" style="left:1683.5px;top:1141.3px;width:70px;height:37px;background:linear-gradient(#3a3a3a,#454545);border-radius:10.7px;box-shadow:inset 0 -2.2px 0 0 #0d0d0d, inset 0 0 0 1.33px #1f1f1f, inset 0 2.5px 0 0 rgba(255,255,255,.16)"></div>
<div class="t" style="left:1698.50px;top:1151px;font-size:17.7px;color:#fff;font-weight:700;letter-spacing:-0.733px;">Save</div>
<div class="cardb" style="top:20px;height:151.5px"></div><div class="cardb" style="top:194.3px;height:631px"></div><div class="cardb" style="top:847.6px;height:228.6px"></div>
</body></html>
